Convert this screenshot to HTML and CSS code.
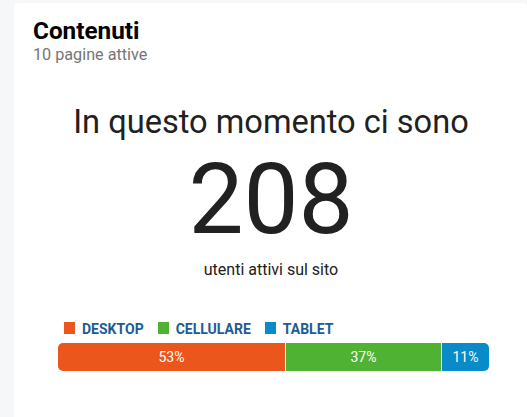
FILE: index.html
```html
<!DOCTYPE html>
<html lang="it">
<head>
<meta charset="utf-8">
<title>Contenuti</title>
<link rel="stylesheet" href="styles.css">
</head>
<body>
<div class="page">
  <section class="card">
    <header class="card-head">
      <h2 class="title">Contenuti</h2>
      <p class="subtitle">10 pagine attive</p>
    </header>
    <div class="live">
      <p class="lead">In questo momento ci sono</p>
      <p class="count">208</p>
      <p class="caption">utenti attivi sul sito</p>
    </div>
    <div class="devices">
      <ul class="legend">
        <li class="legend-item"><span class="swatch desktop"></span>DESKTOP</li>
        <li class="legend-item"><span class="swatch mobile"></span>CELLULARE</li>
        <li class="legend-item"><span class="swatch tablet"></span>TABLET</li>
      </ul>
      <div class="bar">
        <div class="seg desktop" style="width:227px">53%</div>
        <div class="seg mobile" style="width:155px">37%</div>
        <div class="seg tablet" style="width:47px">11%</div>
      </div>
    </div>
  </section>
</div>
</body>
</html>
```
FILE: styles.css
```css
html, body {
  margin: 0;
  padding: 0;
  background: #f6f7f9;
  overflow: hidden;
  font-family: Roboto, "Liberation Sans", sans-serif;
}
.page {
  padding: 3px 0 0 14px;
}
.card {
  background: #fff;
  border-radius: 4px 4px 0 0;
  width: 513px;
  height: 414px;
  padding: 14px 18px 0 19px;
  box-sizing: border-box;
}
.title {
  margin: 0;
  font-size: 24.3px;
  font-weight: 700;
  line-height: 28px;
  color: #000;
}
.subtitle {
  margin: 0;
  font-size: 16.2px;
  line-height: 20px;
  color: #757575;
}
.live {
  text-align: center;
  color: #212121;
  margin-top: 37px;
}
.lead {
  margin: 0;
  font-size: 32.6px;
  line-height: 40px;
}
.count {
  margin: 3px 0 0;
  font-size: 98px;
  line-height: 110px;
}
.caption {
  margin: 5px 0 0;
  font-size: 16px;
  line-height: 20px;
}
.devices {
  margin: 42px 0 0 25px;
  width: 431px;
}
.legend {
  list-style: none;
  margin: 0 0 7px 6px;
  padding: 0;
  display: flex;
  gap: 14px;
}
.legend-item {
  display: flex;
  align-items: flex-start;
  gap: 7px;
  font-size: 14px;
  font-weight: 700;
  line-height: 14px;
  color: #1b5c98;
}
.swatch {
  width: 11px;
  height: 12px;
  display: inline-block;
}
.desktop { background: #eb561c; }
.mobile { background: #50b232; }
.tablet { background: #088bc8; }
.bar {
  display: flex;
  gap: 1px;
  height: 28px;
  border-radius: 5px;
  overflow: hidden;
}
.seg {
  color: #fff;
  font-size: 14px;
  display: flex;
  align-items: center;
  justify-content: center;
}
```
